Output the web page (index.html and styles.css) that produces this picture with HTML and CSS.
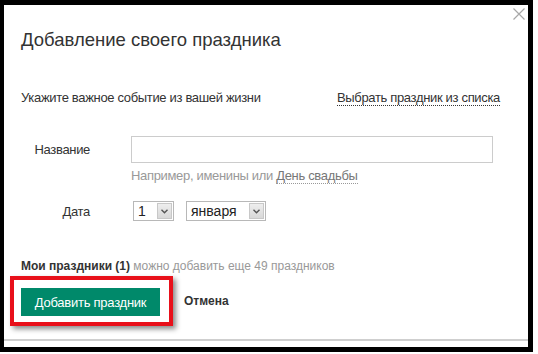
FILE: index.html
```html
<!DOCTYPE html>
<html lang="ru">
<head>
    <meta charset="UTF-8">
    <meta name="viewport" content="width=device-width, initial-scale=1.0">
    <link rel="stylesheet" href="styles.css">
</head>
<body>
    <div class="frame">
        <div class="dialog">
            <!-- Close button in the corner -->
            <button class="close" title="Закрыть">
                <svg width="12" height="12" viewBox="0 0 12 12">
                    <path d="M0.5 0.5 L11.5 11.5 M11.5 0.5 L0.5 11.5" stroke="#a8a8a8" stroke-width="1.2" fill="none"/>
                </svg>
            </button>

            <h1 class="title">Добавление своего праздника</h1>

            <div class="intro">
                <span>Укажите важное событие из вашей жизни</span>
                <a class="dotted intro-link" href="#">Выбрать праздник из списка</a>
            </div>

            <div class="row row-name">
                <label class="label" for="holidayName">Название</label>
                <div class="field">
                    <input type="text" id="holidayName" class="text-input">
                </div>
            </div>
            <div class="hint">Например, именины или <a class="dotted hint-link" href="#">День свадьбы</a></div>

            <div class="row row-date">
                <label class="label">Дата</label>
                <div class="field selects">
                    <div class="select select-day">
                        <span class="select-value">1</span>
                        <span class="select-arrow">
                            <svg width="7" height="5" viewBox="0 0 7 5"><path d="M0.5 0.8 L3.5 3.8 L6.5 0.8" stroke="#555" stroke-width="1.4" fill="none"/></svg>
                        </span>
                    </div>
                    <div class="select select-month">
                        <span class="select-value">января</span>
                        <span class="select-arrow">
                            <svg width="7" height="5" viewBox="0 0 7 5"><path d="M0.5 0.8 L3.5 3.8 L6.5 0.8" stroke="#555" stroke-width="1.4" fill="none"/></svg>
                        </span>
                    </div>
                </div>
            </div>

            <div class="my-holidays"><b>Мои праздники (1)</b> можно добавить еще 49 праздников</div>

            <div class="actions">
                <div class="highlight">
                    <button class="btn-add">Добавить праздник</button>
                </div>
                <a class="cancel" href="#">Отмена</a>
            </div>
        </div>
        <div class="divider"></div>
    </div>
</body>
</html>
```

FILE: styles.css
```css
body {
    margin: 0;
    background: #fff;
    font-family: "Liberation Sans", Arial, sans-serif;
    color: #333;
}
.frame {
    box-sizing: border-box;
    width: 533px;
    height: 352px;
    border-style: solid;
    border-color: #000;
    border-width: 5px 5px 5px 4px;
    display: flex;
    flex-direction: column;
    padding-bottom: 6px;
}
.dialog {
    position: relative;
    flex: 1;
    padding: 0 28px 0 17px;
}
.close {
    position: absolute;
    top: 3px;
    right: 3px;
    width: 12px;
    height: 12px;
    padding: 0;
    border: none;
    background: none;
    cursor: pointer;
    display: block;
}
.close svg {
    display: block;
}
.title {
    margin: 24px 0 0;
    font-size: 18.5px;
    line-height: 21px;
    font-weight: normal;
    color: #333;
}
.intro {
    display: flex;
    justify-content: space-between;
    margin-top: 40px;
    font-size: 13px;
    line-height: 16px;
    letter-spacing: -0.33px;
}
.dotted {
    text-decoration: none;
    border-bottom: 1px dotted #333;
}
.intro-link {
    color: #333;
    line-height: 15px;
}
.row {
    display: flex;
    align-items: center;
    font-size: 13px;
    letter-spacing: -0.33px;
}
.label {
    width: 69px;
    margin-right: 41px;
    text-align: right;
    color: #333;
}
.row-name {
    margin-top: 30px;
}
.text-input {
    box-sizing: border-box;
    width: 362px;
    height: 27px;
    border: 1px solid #ccc;
    margin: 0;
    padding: 2px 6px;
    font: inherit;
}
.hint {
    margin: 5px 0 0 110px;
    font-size: 13px;
    line-height: 16px;
    letter-spacing: -0.33px;
    color: #999;
}
.hint-link {
    color: #777;
    border-bottom-color: #999;
    line-height: 15px;
}
.row-date {
    margin-top: 17px;
}
.selects {
    display: flex;
    gap: 12px;
    margin-left: 2px;
}
.select {
    box-sizing: border-box;
    display: flex;
    height: 20px;
    border: 1px solid #b8b8b8;
    background: #fff;
}
.select-day {
    width: 41px;
}
.select-month {
    width: 80px;
}
.select-value {
    flex: 1;
    padding-left: 4px;
    font-size: 14px;
    line-height: 18px;
    letter-spacing: 0;
    color: #222;
}
.select-arrow {
    width: 15px;
    margin: 1px;
    background: linear-gradient(#eee, #d8d8d8);
    border: 1px solid #c8c8c8;
    box-sizing: border-box;
    display: flex;
    align-items: center;
    justify-content: center;
}
.my-holidays {
    margin-top: 37px;
    font-size: 12px;
    line-height: 16px;
    color: #999;
}
.my-holidays b {
    color: #333;
}
.actions {
    display: flex;
    align-items: center;
    margin-top: 2px;
}
.highlight {
    margin-left: -11px;
    border: 4px solid #e8101a;
    padding: 8px 9px 6px 7px;
    box-shadow: 3px 3px 5px rgba(0, 0, 0, 0.45);
}
.btn-add {
    display: block;
    width: 139px;
    height: 28px;
    border: none;
    background: #00896a;
    color: #fff;
    font-family: inherit;
    font-size: 13px;
    letter-spacing: -0.25px;
    cursor: pointer;
}
.cancel {
    margin-left: 11px;
    font-size: 12px;
    font-weight: bold;
    color: #333;
    text-decoration: none;
}
.divider {
    height: 2px;
    background: #cfcfcf;
}
```
